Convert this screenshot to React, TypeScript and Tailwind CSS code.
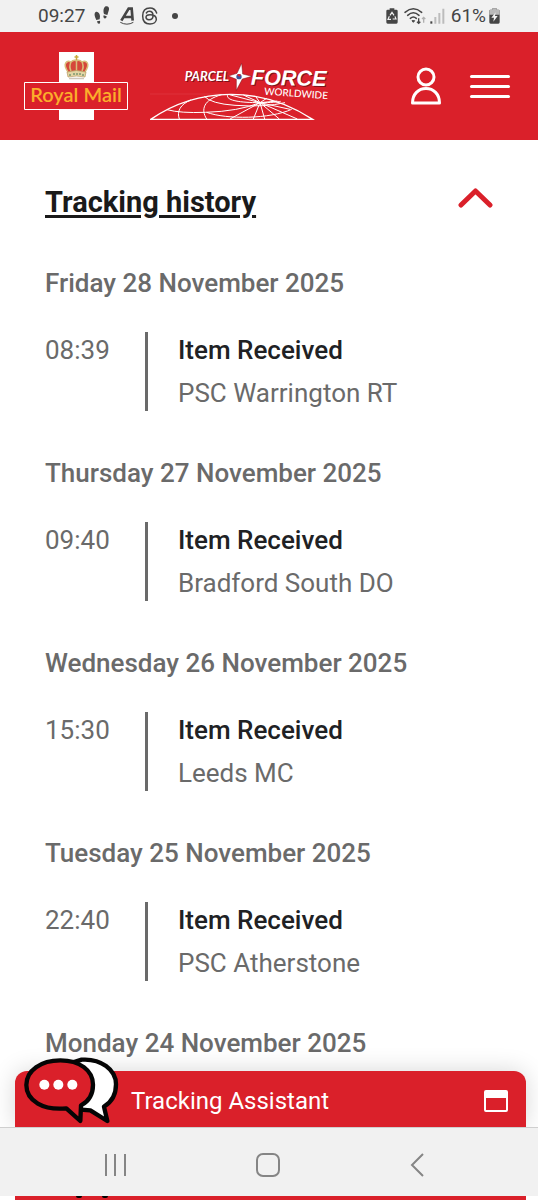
const days = [
  { date: "Friday 28 November 2025", time: "08:39", place: "PSC Warrington RT" },
  { date: "Thursday 27 November 2025", time: "09:40", place: "Bradford South DO" },
  { date: "Wednesday 26 November 2025", time: "15:30", place: "Leeds MC" },
  { date: "Tuesday 25 November 2025", time: "22:40", place: "PSC Atherstone" },
];

function StatusBar() {
  return (
    <div className="flex h-8 items-center justify-between bg-[#f1f1f1] pr-[38px] pl-[38px] text-[19px] leading-8 text-[#454545]">
      <div className="flex items-center">
        <span>09:27</span>
        <svg className="ml-2 h-5 w-[18px]" viewBox="0 0 54 60" fill="#454545" aria-hidden="true">
          <path d="M8 18c7-3 13 5 13 13l-1 9-10 2C7 35 1 24 8 18Z" />
          <path d="m12 46 9-2c3 10-7 14-9 2Z" />
          <path d="M38 1c9-3 12 6 9 13l-4 13-10-3c-3-8-2-19 5-23Z" />
          <path d="m32 28 9 3c-1 11-13 7-9-3Z" />
        </svg>
        <svg className="ml-2 h-5 w-4" viewBox="0 0 48 60" aria-hidden="true">
          <path d="M7 44 29 8h9l3 36M15 33h24" fill="none" stroke="#454545" strokeWidth="8" />
          <path d="M4 49q20 11 39 0" fill="none" stroke="#454545" strokeWidth="3" />
        </svg>
        <svg className="ml-[6px] h-[18px] w-[18px]" viewBox="0 0 54 54" fill="none" stroke="#454545" strokeWidth="4.5" strokeLinecap="round" aria-hidden="true">
          <path d="M47 18C43 7 36 3 27 3 13 3 5 12 5 27s8 24 22 24c11 0 19-6 19-14 0-10-10-14-19-14-7 0-12 3-12 8 0 4 4 7 9 7 7 0 12-4 12-12 0-9-4-13-11-13-4 0-7 2-9 5" />
        </svg>
        <span className="ml-[13px] size-[6px] rounded-full bg-[#454545]" />
      </div>
      <div className="flex items-center">
        <svg className="h-4 w-3" viewBox="0 0 36 48" aria-hidden="true">
          <path d="M11 1h14v4h6q4 0 4 4v34q0 4-4 4H5q-4 0-4-4V9q0-4 4-4h6Z" fill="#454545" />
          <path d="m12 22 6-9 6 9M27 25l3 8H20M15 34H6l4-9" fill="none" stroke="#f1f1f1" strokeWidth="3.5" />
        </svg>
        <svg className="ml-[6px] h-[18px] w-[22px]" viewBox="0 0 66 54" fill="none" aria-hidden="true">
          <path d="M3 16q25-21 50 0M11 25q17-15 34 0M19 34q9-8 18 0" stroke="#454545" strokeWidth="4.5" strokeLinecap="round" />
          <path d="m24 41 4 5 4-5Z" fill="#454545" stroke="#454545" strokeWidth="3" />
          <path d="M44 34v15m-5-5 5 5 5-5" stroke="#454545" strokeWidth="4" />
          <path d="M59 47V31m-5 5 5-5 5 5" stroke="#b0b0b0" strokeWidth="4" />
        </svg>
        <svg className="ml-1 h-4 w-[15px]" viewBox="0 0 45 48" aria-hidden="true">
          <path d="M1 40h6v7H1z" fill="#454545" />
          <path d="M13 27h6v20h-6zM25 15h6v32h-6zM37 2h6v45h-6z" fill="#bcbcbc" />
        </svg>
        <span className="ml-[6px]">61%</span>
        <svg className="ml-[3px] h-4 w-[11px]" viewBox="0 0 33 48" aria-hidden="true">
          <path d="M10 1h13v4h5q4 0 4 4v34q0 4-4 4H5q-4 0-4-4V9q0-4 4-4h5Z" fill="#454545" />
          <path d="M10 1h13v4h5q4 0 4 4v11H1V9q0-4 4-4h5Z" fill="#b9b9b9" />
          <path d="M20 13 7 29h8l-2 12 13-17h-8Z" fill="#f1f1f1" />
        </svg>
      </div>
    </div>
  );
}

function RoyalMailLogo() {
  return (
    <svg className="h-[68px] w-[104px]" viewBox="0 0 104 68" role="img" aria-label="Royal Mail">
      <path d="M35 0h35v68H35z" fill="#fff" />
      <path d="M.5 30.500h103v27H.5z" fill="#da202a" stroke="#fff" />
      <g>
        <path d="M44 20C39 12 43 9 47 10q3-3 5.500-2 2.500-1 5.500 2c5-1 8 2 3 10Z" fill="#d5473a" />
        <path d="M44 20C38 11 43 8 47 10c-2 4-1 7 0 9M61 20c6-9 1-12-3-10 2 4 1 7 0 9M47 10q3-3 5.500-1 2.500-2 5.500 1M52.500 8v11" fill="none" stroke="#d9bd7a" strokeWidth="1.500" />
        <path d="M43 20q9.500-3 19 0l-1 5q-8.500-2-17 0Z" fill="#e2d5a4" stroke="#b8985f" strokeWidth=".7" />
        <path d="M45 23h2m2-1h2m1 0h2m1 0h2m1 1h2" stroke="#4d7a58" strokeWidth="1.200" />
        <path d="M52.500 3v5M50.500 5h4" stroke="#c9a93c" strokeWidth="1.500" />
        <path d="M45 26.500h15" stroke="#cfc6bb" strokeWidth="1.500" />
      </g>
      <text x="52" y="50" textAnchor="middle" fill="#fbae2b" className="font-['Lato'] text-[20px] font-semibold">
        Royal Mail
      </text>
    </svg>
  );
}

function ParcelforceLogo() {
  return (
    <svg className="h-[62px] w-[180px]" viewBox="30 30 540 186" role="img" aria-label="Parcelforce Worldwide">
      <g fill="#7d1118" transform="translate(3 3)">
        <text x="134" y="97" className="font-['Liberation_Sans_Narrow','Lato',sans-serif] text-[39px] font-bold italic">PARCEL</text>
        <text x="332" y="107" transform="rotate(1 332 107)" className="font-['Liberation_Sans'] text-[65px] font-bold italic">FORCE</text>
      </g>
      <g fill="#fff">
        <text x="134" y="97" className="font-['Liberation_Sans_Narrow','Lato',sans-serif] text-[39px] font-bold italic">PARCEL</text>
        <text x="332" y="107" transform="rotate(1 332 107)" className="font-['Liberation_Sans'] text-[65px] font-bold italic">FORCE</text>
        <text x="372" y="137" transform="rotate(4 372 137)" className="font-['Lato'] text-[30px] font-medium">WORLDWIDE</text>
      </g>
      <path d="m305 43 3 32 28 7-29 8-18 34 0-33-24-10 26-8Z" fill="#fff" stroke="#7d1118" strokeWidth="1.500" />
      <circle cx="297" cy="83" r="8" fill="#39549b" />
      <path d="M291 78q6-6 12 0l-5 5Z" fill="#da202a" />
      <path d="M30 135h230" stroke="#e9555b" strokeWidth="1" />
      <g fill="none" stroke="#fff" strokeWidth="3">
        <path d="M32 211Q140 137 270 136T518 211Z" strokeWidth="4" />
        <path d="M118 210c-8-22 2-44 35-57M200 210c-18-28-10-58 45-73M263 137c-6 15 25 24 97 24 34 0 52-2 62-4" />
        <path d="M81 182q40 11 115 8 100-3 164-29M193 142q20 22 92 27 90 6 150-8M268 137l92 24M310 138l50 23M348 144l12 17M380 148l-20 13M412 156l-52 5M360 161l-90 49M360 161l-20 49M360 161l14 49M360 161l58 49M360 161l112 49M360 161l90 20M200 190c60 22 190 20 255-9" />
      </g>
    </svg>
  );
}

function ChatIcon() {
  return (
    <svg className="absolute -top-[14px] left-2 h-[68px] w-24" viewBox="0 0 288 204" aria-hidden="true">
      <path d="M176 8c58-4 103 30 103 74 0 33-14 54-36 67l10 43-51-32-52-4-30-130Z" fill="#fff" stroke="#050505" strokeWidth="13" strokeLinejoin="round" />
      <path d="M112 10c58 0 98 30 98 73 0 31-13 50-36 62l-2 47-42-38c-68 7-120-22-120-70 0-44 44-74 102-74Z" fill="#da202a" stroke="#050505" strokeWidth="13" strokeLinejoin="round" />
      <g fill="#fff">
        <circle cx="64" cy="83" r="15" />
        <circle cx="106" cy="83" r="15" />
        <circle cx="148" cy="83" r="15" />
      </g>
    </svg>
  );
}

export default function App() {
  return (
    <div className="flex min-h-screen flex-col bg-white font-['Roboto',sans-serif]">
      <StatusBar />
      <header className="flex h-[108px] items-center bg-[#da202a] pr-7 pl-6">
        <a href="#royal-mail">
          <RoyalMailLogo />
        </a>
        <a href="#parcelforce" className="mt-2 ml-[22px]">
          <ParcelforceLogo />
        </a>
        <button type="button" aria-label="Account" className="ml-auto">
          <svg className="h-[38px] w-8" viewBox="0 0 32 38" fill="none" stroke="#fff" strokeWidth="3" strokeLinejoin="round">
            <circle cx="16" cy="10" r="8" />
            <path d="M2.500 36c0-9 6-14.500 13.500-14.500S29.500 27 29.500 36Z" />
          </svg>
        </button>
        <button type="button" aria-label="Menu" className="ml-7 flex w-10 flex-col gap-[7px]">
          <span className="h-[3px] rounded-full bg-white" />
          <span className="h-[3px] rounded-full bg-white" />
          <span className="h-[3px] rounded-full bg-white" />
        </button>
      </header>

      <main className="flex-1 px-[45px] pt-10">
        <button type="button" aria-expanded="true" className="flex w-full items-center justify-between">
          <h2 className="text-[29px] leading-[44px] font-bold text-[#1a1a1a] underline decoration-[3px] underline-offset-[3px]">
            Tracking history
          </h2>
          <svg className="mb-2 h-5 w-[35px]" viewBox="0 0 35 20" fill="none" stroke="#da202a" strokeWidth="5" strokeLinecap="round" strokeLinejoin="round" aria-hidden="true">
            <path d="M3 17 17.500 3 32 17" />
          </svg>
        </button>

        <div className="mt-[38px]">
          {days.map((day) => (
            <section key={day.date} className="mb-[41px]">
              <h3 className="text-[26px] leading-[42px] font-medium text-[#6a6a6a]">{day.date}</h3>
              <div className="mt-7 flex text-[26px] leading-9 text-[#6a6a6a]">
                <time className="w-[100px]">{day.time}</time>
                <div className="flex flex-col gap-[7px] border-l-[3px] border-[#6a6a6a] pl-[30px]">
                  <p className="font-medium text-[#202124]">Item Received</p>
                  <p>{day.place}</p>
                </div>
              </div>
            </section>
          ))}
          <h3 className="text-[26px] leading-[42px] font-medium text-[#6a6a6a]">Monday 24 November 2025</h3>
        </div>
      </main>

      <footer>
        <div className="pr-3 pl-[15px]">
          <button type="button" className="relative flex h-14 w-full items-center justify-between rounded-t-xl bg-[#da202a] pt-1 pr-[18px] pl-[116px] text-white shadow-[0_0_24px_rgba(0,0,0,0.16)]">
            <ChatIcon />
            <span className="text-[24px]">Tracking Assistant</span>
            <svg className="h-[22px] w-6" viewBox="0 0 24 22" aria-hidden="true">
              <rect x="1" y="1" width="22" height="20" rx="1" fill="none" stroke="#fff" strokeWidth="2" />
              <path d="M1 1h22v7H1z" fill="#fff" />
            </svg>
          </button>
        </div>
        <nav className="relative flex h-[69px] items-center justify-between border-t border-[#cfcfcf] bg-[#f1f1f1] pt-[6px] pr-[114px] pl-[102px] text-[#858585]">
          <button type="button" aria-label="Recent apps">
            <svg className="size-6" viewBox="0 0 24 24" fill="none" stroke="currentColor" strokeWidth="2">
              <path d="M4 1v22M13 1v22M23 1v22" />
            </svg>
          </button>
          <button type="button" aria-label="Home">
            <svg className="size-6" viewBox="0 0 24 24" fill="none" stroke="currentColor" strokeWidth="2">
              <rect x="1" y="1" width="22" height="22" rx="6" />
            </svg>
          </button>
          <button type="button" aria-label="Back">
            <svg className="h-6 w-[14px]" viewBox="0 0 14 24" fill="none" stroke="currentColor" strokeWidth="2">
              <path d="M13 1 2 12l11 11" />
            </svg>
          </button>
        </nav>
        <div className="pr-3 pl-[15px]">
          <div className="h-1 bg-[#da202a] pl-[61px]">
            <div className="flex gap-5">
              <span className="h-[2px] w-[6px] rounded-b-full bg-black" />
              <span className="h-[2px] w-[6px] rounded-b-full bg-black" />
            </div>
          </div>
        </div>
      </footer>
    </div>
  );
}
